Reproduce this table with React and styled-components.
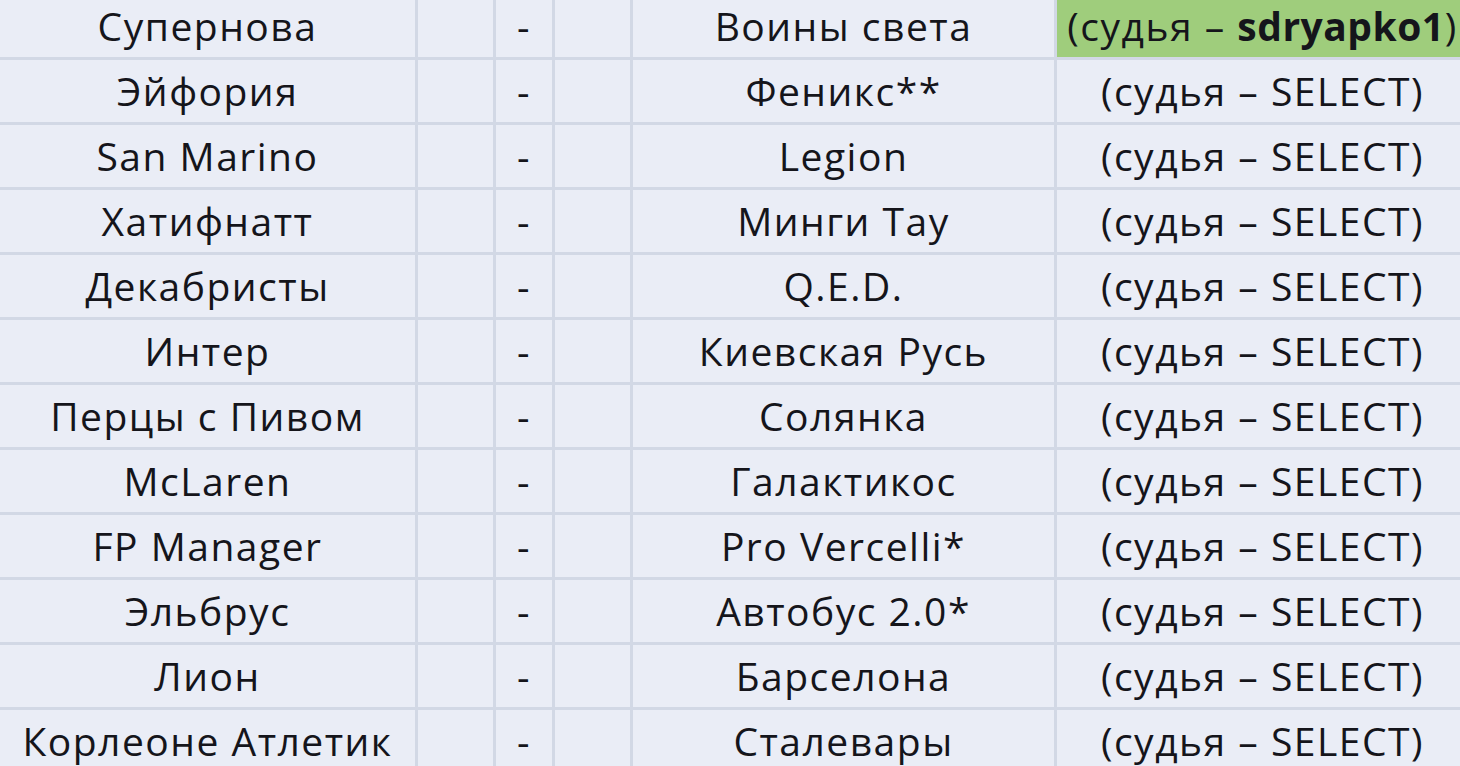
import React from 'react'
import styled, { createGlobalStyle } from 'styled-components'

const GlobalStyle = createGlobalStyle`
  html, body {
    margin: 0;
    padding: 0;
    width: 1460px;
    height: 766px;
    overflow: hidden;
    background: #eaedf6;
  }
`

const Sheet = styled.div`
  display: grid;
  grid-template-columns: 418px 78px 59px 78px 424px 414px;
  grid-auto-rows: 65px;
  margin-top: -5px;
  width: 1471px;
  font-family: 'Open Sans', Lato, sans-serif;
  color: #15151b;
`

const Cell = styled.div`
  display: flex;
  align-items: flex-end;
  justify-content: center;
  padding-bottom: 5px;
  box-sizing: border-box;
  border-right: 3px solid #d2d8e5;
  border-bottom: 3px solid #d2d8e5;
  background: ${p => (p.$hl ? '#9fcd7c' : '#eaedf6')};
  font-size: 39px;
  line-height: 1.3;
  letter-spacing: 1.5px;
  white-space: nowrap;
`

const Bold = styled.b`
  font-weight: 700;
  letter-spacing: 0.5px;
`

const rows = [
  ['Супернова', 'Воины света', 'sdryapko1'],
  ['Эйфория', 'Феникс**'],
  ['San Marino', 'Legion'],
  ['Хатифнатт', 'Минги Тау'],
  ['Декабристы', 'Q.E.D.'],
  ['Интер', 'Киевская Русь'],
  ['Перцы с Пивом', 'Солянка'],
  ['McLaren', 'Галактикос'],
  ['FP Manager', 'Pro Vercelli*'],
  ['Эльбрус', 'Автобус 2.0*'],
  ['Лион', 'Барселона'],
  ['Корлеоне Атлетик', 'Сталевары'],
]

export default function App() {
  return (
    <>
      <GlobalStyle />
      <Sheet>
        {rows.map(([home, away, judge]) => (
          <React.Fragment key={home}>
            <Cell>{home}</Cell>
            <Cell />
            <Cell>-</Cell>
            <Cell />
            <Cell>{away}</Cell>
            <Cell $hl={!!judge}>
              {judge ? (
                <span>
                  (судья – <Bold>{judge}</Bold>)
                </span>
              ) : (
                '(судья – SELECT)'
              )}
            </Cell>
          </React.Fragment>
        ))}
      </Sheet>
    </>
  )
}
